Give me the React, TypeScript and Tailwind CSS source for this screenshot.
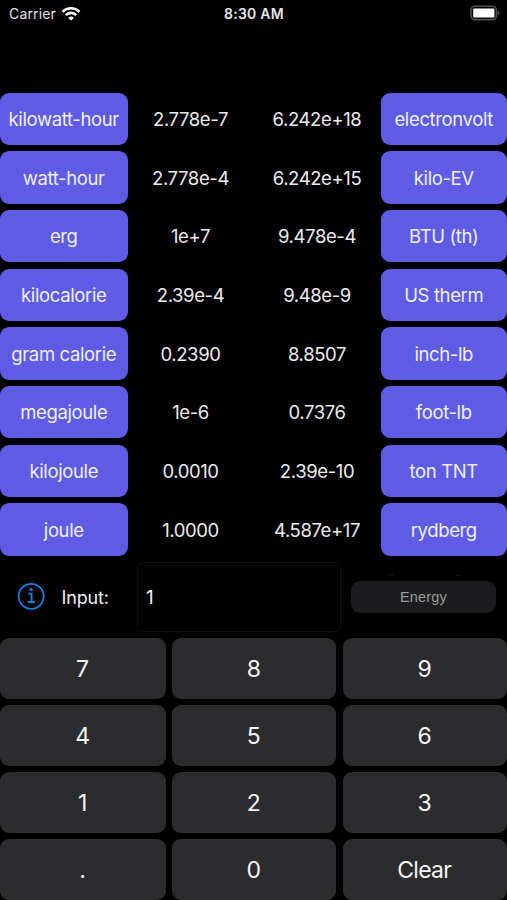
import React, { useState } from "react";

type Conversion = { left: string; leftValue: string; rightValue: string; right: string };

const conversions: Conversion[] = [
  { left: "kilowatt-hour", leftValue: "2.778e-7", rightValue: "6.242e+18", right: "electronvolt" },
  { left: "watt-hour", leftValue: "2.778e-4", rightValue: "6.242e+15", right: "kilo-EV" },
  { left: "erg", leftValue: "1e+7", rightValue: "9.478e-4", right: "BTU (th)" },
  { left: "kilocalorie", leftValue: "2.39e-4", rightValue: "9.48e-9", right: "US therm" },
  { left: "gram calorie", leftValue: "0.2390", rightValue: "8.8507", right: "inch-lb" },
  { left: "megajoule", leftValue: "1e-6", rightValue: "0.7376", right: "foot-lb" },
  { left: "kilojoule", leftValue: "0.0010", rightValue: "2.39e-10", right: "ton TNT" },
  { left: "joule", leftValue: "1.0000", rightValue: "4.587e+17", right: "rydberg" },
];

const keys = ["7", "8", "9", "4", "5", "6", "1", "2", "3", ".", "0", "Clear"];

function StatusBar() {
  return (
    <header className="grid h-7 grid-cols-3 items-center pl-[8px] pr-[7px] text-[#e6e6e6]">
      <div className="flex items-center gap-[5px] pl-px">
        <span className="text-[14px] leading-none tracking-[0.15px]">Carrier</span>
        <svg className="-mt-[2px]" width="20" height="15" viewBox="0 0 20 15" fill="none" stroke="#fff" strokeWidth="2.7">
          <path d="M1.5 5.7a12.2 12.2 0 0 1 17 0" />
          <path d="M4.7 9.1a7.6 7.6 0 0 1 10.6 0" />
          <path d="M7.2 11.9a4 4 0 0 1 5.6 0L10 14.6Z" fill="#fff" stroke="none" />
        </svg>
      </div>
      <span className="text-center text-[14px] font-semibold leading-none tracking-[0.25px]">8:30 AM</span>
      <svg className="-mt-[2px] justify-self-end" width="30" height="16" viewBox="0 0 30 16">
        <rect x="1" y="1.2" width="25.4" height="13.4" rx="3.8" fill="#000" stroke="#505052" strokeWidth="1.6" />
        <rect x="3.2" y="3.4" width="21.2" height="9.2" rx="1.2" fill="#fff" />
        <path d="M27.6 5.6c2.4 1 2.4 3.6 0 4.6Z" fill="#505052" />
      </svg>
    </header>
  );
}

function UnitButton({ label }: { label: string }) {
  return (
    <button className="flex items-center justify-center whitespace-nowrap rounded-[9px] bg-[#5e5ce5] pt-px text-[18.5px] leading-none tracking-[-0.37px] text-[#efefff]">
      {label}
    </button>
  );
}

function Value({ text }: { text: string }) {
  return (
    <span className="flex items-center justify-center whitespace-nowrap pt-px text-[18.5px] leading-none tracking-[-0.4px] text-[#ececec]">
      {text}
    </span>
  );
}

export default function App() {
  const [input, setInput] = useState("1");

  const press = (key: string) => setInput((value) => (key === "Clear" ? "" : value + key));

  return (
    <div className="flex h-[900px] w-[507px] flex-col overflow-hidden bg-black font-['Inter',sans-serif]">
      <StatusBar />
      <main className="flex flex-1 flex-col pt-[64.6px]">
        <section className="grid h-[463px] grid-cols-[127.5px_126px_127px_126.5px] grid-rows-8 gap-y-[6.3px]">
          {conversions.map((row) => (
            <React.Fragment key={row.left}>
              <UnitButton label={row.left} />
              <Value text={row.leftValue} />
              <Value text={row.rightValue} />
              <UnitButton label={row.right} />
            </React.Fragment>
          ))}
        </section>
        <section className="mt-[6.4px] flex h-[70px] items-center">
          <svg className="ml-[17px] -mt-px" width="28" height="28" viewBox="0 0 28 28" fill="none" stroke="#1482e6" strokeWidth="1.7">
            <circle cx="14.2" cy="14.3" r="12.5" />
            <path d="M11.4 11.6h3.2v8.4M10.8 20h7" strokeWidth="1.8" />
            <circle cx="14.1" cy="7.6" r="1.7" fill="#1482e6" stroke="none" />
          </svg>
          <span className="ml-[16.5px] w-[75.5px] pt-[2px] text-[18px] leading-none tracking-[-0.15px] text-[#f0f0f0]">Input:</span>
          <div className="flex h-full w-[203.5px] items-center rounded-[6px] border border-[#111] pl-2 pt-px text-[19px] leading-none text-[#f2f2f2]">
            {input}
          </div>
          <div className="relative ml-[10.5px]">
            <button className="flex h-[31.5px] w-[145px] items-center justify-center rounded-[9px] bg-[#1c1c1e] font-['Liberation_Sans',sans-serif] text-[14.5px] leading-none tracking-[0.2px] text-[#9b9b9f]">
              Energy
            </button>
            <span className="absolute -top-[6px] left-[38px] h-px w-[5px] bg-[#141414]" />
            <span className="absolute -top-[6px] left-[105px] h-px w-[5px] bg-[#111]" />
          </div>
        </section>
        <section className="mt-[6px] grid flex-1 grid-cols-[165.5px_164.5px_164.5px] grid-rows-4 gap-x-[6.25px] gap-y-[6.3px]">
          {keys.map((key) => (
            <button
              key={key}
              onClick={() => press(key)}
              className="flex items-center justify-center rounded-[9px] bg-[#2c2c2e] pr-px pt-[1.8px] text-[23px] leading-none tracking-[-0.7px] text-[#f5f5f5]"
            >
              {key}
            </button>
          ))}
        </section>
      </main>
    </div>
  );
}
